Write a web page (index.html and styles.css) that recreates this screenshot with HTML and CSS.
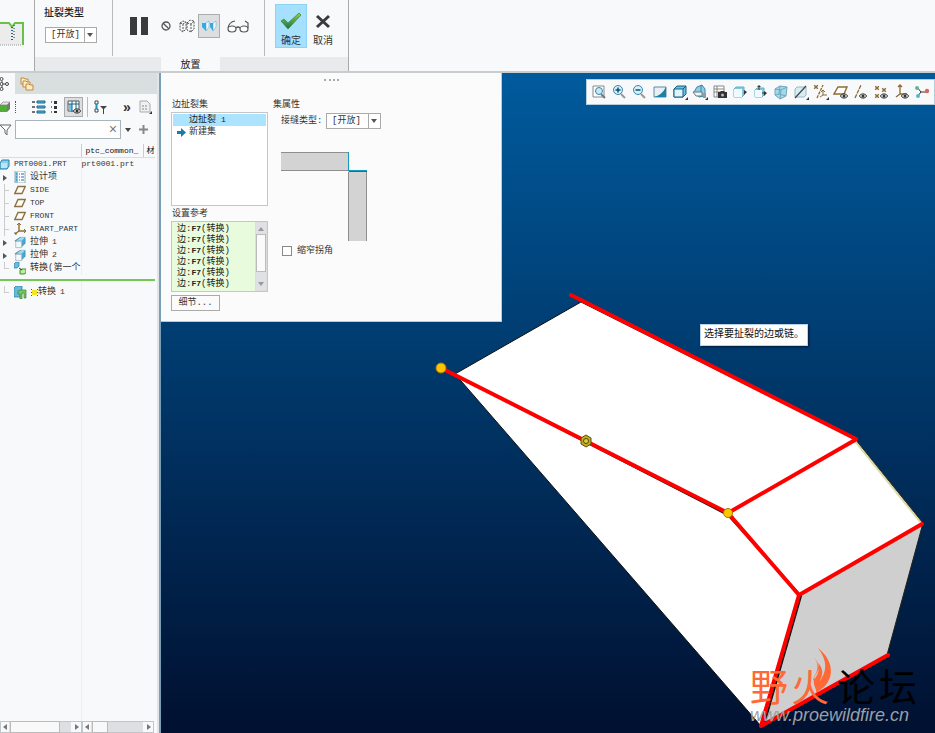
FILE: index.html
```html
<!DOCTYPE html>
<html lang="zh-CN">
<head>
<meta charset="utf-8">
<title>扯裂类型</title>
<link rel="stylesheet" href="styles.css">
</head>
<body>
<svg class="defs" aria-hidden="true">
  <defs>
    <symbol id="plane" viewBox="0 0 12 12"><path d="M4 2.5h7.2L8 9.5H.8z" fill="#fffdf5" stroke="#8d7142" stroke-width="1.4"/></symbol>
    <symbol id="extrude" viewBox="0 0 14 14"><path d="M1 5l6-4h6v7l-4 4z" fill="#46a7d2" stroke="#39799c" stroke-width=".6"/><path d="M3 5L8 1h5L9 5z" fill="#a5d9ec"/><path d="M2 5.500h7V13H2z" fill="#f4f7fa" stroke="#9aa5ab" stroke-width=".8"/></symbol>
    <symbol id="eye" viewBox="0 0 8 6"><path d="M.3 3C2 .2 6 .2 7.700 3 6 5.800 2 5.800.3 3z" fill="#f2f2f2" stroke="#333"/><circle cx="4" cy="3" r="1.500" fill="#333"/></symbol>
    <symbol id="cross4" viewBox="0 0 5 5"><path d="M1 1l3 3M4 1L1 4" stroke="#8d6b32" stroke-width="1.200"/></symbol>
    <linearGradient id="tick" x2="0" y2="1"><stop stop-color="#9ccc3c"/><stop offset="1" stop-color="#0d7350"/></linearGradient>
  </defs>
</svg>

<header class="ribbon">
  <div class="ribbon-icon">
    <svg width="24" height="26" viewBox="0 0 24 26"><path d="M0 2h23v22H0z" fill="#ececec"/><path d="M0 2h9l3 4 3-4h8v22" fill="none" stroke="#69c04d" stroke-width="2"/><path d="M0 24h22" stroke="#999" stroke-dasharray="1 1"/><path d="M12 6v13" stroke="#16688c" stroke-width="2" stroke-dasharray="1 2"/><path d="M14 4v13" stroke="#333" stroke-dasharray="1 2"/></svg>
  </div>
  <div class="ribbon-body">
    <div class="tools">
      <div class="tool-group type-group">
        <label for="rip-type">扯裂类型</label>
        <span class="select"><select id="rip-type"><option>[开放]</option></select></span>
      </div>
      <div class="tool-group play-group">
        <button class="flat" aria-label="暂停"><svg width="18" height="18" viewBox="0 0 18 18"><path d="M0 0h7v18H0zM11 0h7v18h-7z" fill="#3b3b3b"/></svg></button>
        <button class="flat" aria-label="无预览"><svg width="10" height="10" viewBox="0 0 10 10"><circle cx="5" cy="5" r="4" fill="none" stroke="#555" stroke-width="1.300"/><path d="M2.200 2.200l5.600 5.600" stroke="#555" stroke-width="1.300"/></svg></button>
        <button class="flat" aria-label="分离"><svg width="16" height="14" viewBox="0 0 16 14"><path d="M1 4l3 1 3-2v7l-3 3-3-2zM4 5v7M8 4l4 1 3-3v8l-3 3-4-2zM12 5v8M1 4l3-2 3 1M8 4l3-3 4 1" fill="none" stroke="#555" stroke-dasharray="2 1"/></svg></button>
        <button class="flat pressed" aria-label="附加"><svg width="16" height="12" viewBox="0 0 16 12"><path d="M1 3l3-2h4v6l-4 4-3-4zM9 3l2-2h4v6l-3 4-3-4z" fill="#bdeaff"/><path d="M1 3h4v8L1 7zM9 3h3v8L9 7z" fill="#35a9e0"/><path d="M5 3l3-2v6l-3 4zM12 3l3-2v6l-3 4z" fill="#eefbff" stroke="#559fbf" stroke-width=".5"/></svg></button>
        <button class="flat" aria-label="眼镜预览"><svg width="22" height="13" viewBox="0 0 22 13"><ellipse cx="5" cy="9" rx="4" ry="3" fill="#fff" stroke="#555" stroke-width="1.200"/><ellipse cx="17" cy="9" rx="4" ry="3" fill="#fff" stroke="#555" stroke-width="1.200"/><path d="M9 8q2-2 4 0M1 8q1-6 7-7M21 8V3l-3-2" fill="none" stroke="#555" stroke-width="1.200"/></svg></button>
      </div>
      <div class="tool-group ok-group">
        <button class="big ok"><svg width="22" height="18" viewBox="0 0 22 18"><path d="M1 9l3-2 4 4L19 1l2 2L8 17z" fill="url(#tick)" stroke="#35843a" stroke-width=".7"/></svg>确定</button>
        <button class="big"><svg width="22" height="18" viewBox="0 0 22 18"><path d="M5 4l12 11M17 4L5 15" stroke="#3b3b3b" stroke-width="3"/></svg>取消</button>
      </div>
    </div>
    <nav class="tabs"><button class="tab">放置</button></nav>
  </div>
</header>

<main class="work">
  <aside class="sidebar">
    <div class="side-tabs">
      <button class="side-tab active" aria-label="模型树"><svg width="9" height="14" viewBox="0 0 9 14"><g fill="#fff" stroke="#444"><path d="M2 4v7M3 7h3" /><circle cx="1.500" cy="2" r="1.500"/><circle cx="1.500" cy="7" r="1.500"/><circle cx="1.500" cy="12" r="1.500"/><circle cx="7" cy="7" r="1.500"/></g></svg></button>
      <button class="side-tab" aria-label="文件夹"><svg width="14" height="14" viewBox="0 0 14 14"><g fill="#ffedc9" stroke="#c08a3c"><path d="M1 1h3l1 1h3v5H1z"/><path d="M3 4h3l1 1h3v5H3z"/><path d="M6 7h3l1 1h3v5H6z"/></g></svg></button>
    </div>
    <div class="side-tools">
      <button class="flat" aria-label="模型"><svg width="10" height="14" viewBox="0 0 10 14"><path d="M0 5h7v7H0z" fill="#4fae36"/><path d="M0 5l3-3h7L7 5z" fill="#e3e7e2" stroke="#777" stroke-width=".6"/><path d="M7 5l3-3v7l-3 3z" fill="#777"/></svg></button>
      <span class="grip"></span>
      <button class="flat" aria-label="展开"><svg width="14" height="14" viewBox="0 0 14 14"><path d="M5 1h8v2H5zM5 6h8v2H5zM5 11h8v2H5z" fill="#54b9e2" stroke="#17668d"/><path d="M0 2h3M0 7h3M0 12h3" stroke="#444" stroke-width="1.500"/></svg></button>
      <button class="flat" aria-label="折叠"><svg width="10" height="14" viewBox="0 0 10 14"><path d="M4 1h3v3H4zM4 6h3v3H4zM4 11h3v2H4z" fill="#333"/><path d="M1 2h1M1 7h1M1 12h1" stroke="#555" stroke-width="1.500"/></svg></button>
      <button class="flat pressed columns" aria-label="树列"><svg width="14" height="14" viewBox="0 0 14 14"><path d="M1 1h11v10H1z" fill="#fff" stroke="#555"/><path d="M2 4h3v7H2z" fill="#6ec4e8"/><path d="M1 4h11M5 1v11M9 1v9" stroke="#17668d"/><use href="#eye" x="6" y="8" width="8" height="6"/></svg></button>
      <span class="rule"></span>
      <button class="flat" aria-label="过滤器"><svg width="13" height="14" viewBox="0 0 13 14"><path d="M1 1h3v3H1zM1 9h3v3H1z" fill="#fff" stroke="#444"/><path d="M2.500 4v5" stroke="#2590b9" stroke-width="2"/><path d="M6 6h7l-3 3v5H9V9z" fill="#444"/></svg></button>
      <button class="flat more" aria-label="更多">»</button>
      <button class="flat" aria-label="列表"><svg width="13" height="14" viewBox="0 0 13 14"><path d="M1 1h7l3 3v8H1z" fill="#eef0f1" stroke="#aaa"/><path d="M3 6h6M3 9h6" stroke="#888" stroke-dasharray="2 1"/><path d="M13 11v3h-3z" fill="#333"/></svg></button>
    </div>
    <div class="search">
      <svg width="12" height="12" viewBox="0 0 12 12"><path d="M0 1h11L7 6v5L5 9V6z" fill="#fff" stroke="#666"/></svg>
      <span class="search-box"><input type="text" aria-label="搜索"><button class="flat clear" aria-label="清除">×</button></span>
      <span class="caret"></span>
      <button class="flat" aria-label="添加"><svg width="9" height="9" viewBox="0 0 9 9"><path d="M4.500 0v9M0 4.500h9" stroke="#888" stroke-width="2"/></svg></button>
    </div>
    <table class="tree">
      <thead><tr><th class="name"></th><th class="common">ptc_common_</th><th class="mat">材</th></tr></thead>
      <tbody>
        <tr><td><div class="node root"><svg width="11" height="11" viewBox="0 0 11 11"><path d="M1 4l2-3h7v6l-2 3H1z" fill="#89cfeb" stroke="#257fa8"/><path d="M2 4h6v5H2z" fill="#b9e7f7"/></svg><span class="latin">PRT0001.PRT</span></div></td><td class="latin">prt0001.prt</td><td></td></tr>
        <tr><td><div class="node"><i class="arrow"></i><svg width="12" height="12" viewBox="0 0 12 12"><path d="M1 0h10v12H1z" fill="#fff" stroke="#8badbf"/><path d="M1 1h3v11H1z" fill="#83c6df"/><path d="M2 3h1M5 3h1M7 3h3M2 6h1M5 6h1M7 6h3M2 9h1M5 9h1M7 9h3" stroke="#246b9c"/></svg>设计项</div></td><td></td><td></td></tr>
        <tr><td><div class="node"><i class="stem"></i><svg width="12" height="12"><use href="#plane"/></svg><span class="latin">SIDE</span></div></td><td></td><td></td></tr>
        <tr><td><div class="node"><i class="stem"></i><svg width="12" height="12"><use href="#plane"/></svg><span class="latin">TOP</span></div></td><td></td><td></td></tr>
        <tr><td><div class="node"><i class="stem"></i><svg width="12" height="12"><use href="#plane"/></svg><span class="latin">FRONT</span></div></td><td></td><td></td></tr>
        <tr><td><div class="node"><i class="stem"></i><svg width="12" height="12" viewBox="0 0 12 12"><path d="M5 0v8h7M5 8l-4 3" fill="none" stroke="#8d6b32" stroke-width="1.400"/><path d="M3 2l2-2 2 2M1 9v2h2M10 6l2 2-2 2" fill="none" stroke="#8d6b32"/></svg><span class="latin">START_PART</span></div></td><td></td><td></td></tr>
        <tr><td><div class="node"><i class="arrow"></i><svg width="12" height="13"><use href="#extrude"/></svg>拉伸<span class="latin">1</span></div></td><td></td><td></td></tr>
        <tr><td><div class="node"><i class="arrow"></i><svg width="12" height="13"><use href="#extrude"/></svg>拉伸<span class="latin">2</span></div></td><td></td><td></td></tr>
        <tr><td><div class="node"><i class="stem last"></i><svg width="12" height="13" viewBox="0 0 12 13"><path d="M0 2l2-2h3v4L3 6H0z" fill="#67bde0" stroke="#287da0" stroke-width=".7"/><path d="M6 8l2-1h4v4l-2 1H6z" fill="#b9f098" stroke="#3c932d"/><path d="M5 6l3 2" stroke="#333"/></svg>转换(第一个</div></td><td></td><td></td></tr>
        <tr class="insert"><td></td><td></td><td></td></tr>
        <tr class="after"><td><div class="node"><i class="stem last"></i><svg width="13" height="13" viewBox="0 0 13 13"><path d="M0 2l2-2h6v8l-2 3H0z" fill="#65b9dd" stroke="#237899" stroke-width=".7"/><path d="M4 5l3-1h5v8h-2V7H8v6H6V8H4z" fill="#75c75f" stroke="#39843b" stroke-width=".7"/></svg><span class="star"><svg width="7" height="7" viewBox="0 0 7 7"><path d="M0 0l7 7M7 0L0 7M0 3.500h7" stroke="#555"/><path d="M1 1h5v5H1z" fill="#f5e71e"/></svg></span>转换<span class="latin">1</span></div></td><td></td><td></td></tr>
      </tbody>
    </table>
    <div class="filler"></div>
    <div class="hbars">
      <div class="hbar"><b class="left"></b><span class="thumb long"></span><b class="right"></b></div>
      <div class="hbar second"><b class="left"></b><span class="thumb"></span><b class="right"></b></div>
    </div>
  </aside>

  <section class="viewport">
    <svg class="scene" viewBox="161 73 774 660" preserveAspectRatio="xMinYMin meet">
      <path d="M455 374L581 302 855 439 923 523 799 595 761 726z" fill="#fff" stroke="#111"/>
      <path d="M799 595L923 523 887 655 761 726z" fill="#cfcfcf" stroke="#22221b"/>
      <path d="M855 441l67 83" stroke="#d9d9a5" stroke-width="2"/><path d="M856 440l67 83" stroke="#333"/>
      <path d="M453 374L728 515 801 596 764 725" fill="none" stroke="#111" stroke-width="2"/>
      <path d="M571 295L856 439M855 440L728 513M441 368L728 513 799 595 922 524M799 595L761 726 888 655" fill="none" stroke="#f00" stroke-width="4" stroke-linecap="round" stroke-linejoin="round"/>
      <g fill="#ffc400" stroke="#a67a00"><circle cx="441" cy="368" r="5"/><circle cx="728" cy="513" r="4.500"/></g>
      <path d="M586 435l5 3v6l-5 3-5-3v-6z" fill="#c0aa22" stroke="#5c5109"/><circle cx="586" cy="441" r="2.500" fill="#e0cd37" stroke="#534a0c"/>
      <g class="mark"><text x="750" y="701" fill="#ff6935">野</text><text x="791" y="701" fill="#ff6935">火</text><text x="837" y="701">论</text><text x="879" y="701">坛</text></g>
      <path d="M818 648c15 12 17 28 6 39l-8 6c1-5-3-6-2-13 1-8 7-9 4-17 7 7 4 14 1 19 8-10 9-21-1-34zM814 657c8 12 0 17-1 24 8-9 7-16 1-24z" fill="#ff6935"/>
      <text class="site" x="750" y="721">www.proewildfire.cn</text>
    </svg>

    <div class="view-tools">
      <button aria-label="重新调整"><svg viewBox="0 0 16 16"><path d="M2 2h11v11H2z" fill="#fff" stroke="#888"/><circle cx="8" cy="7" r="3.500" fill="#c4e9f7" stroke="#3686a9"/><path d="M10 10l4 4" stroke="#777" stroke-width="2"/></svg></button>
      <button aria-label="放大"><svg viewBox="0 0 16 16"><circle cx="7" cy="6" r="4.500" fill="#d3effa" stroke="#3686a9"/><path d="M10 10l4 4" stroke="#999" stroke-width="2"/><path d="M4.500 6h5M7 3.500v5" stroke="#174c6a" stroke-width="1.500"/></svg></button>
      <button aria-label="缩小"><svg viewBox="0 0 16 16"><circle cx="7" cy="6" r="4.500" fill="#d3effa" stroke="#3686a9"/><path d="M10 10l4 4" stroke="#999" stroke-width="2"/><path d="M4.500 6h5" stroke="#174c6a" stroke-width="1.500"/></svg></button>
      <button aria-label="重画"><svg viewBox="0 0 16 16"><path d="M2 3h12v10H2z" fill="#e8eff2" stroke="#618b9d"/><path d="M2 13Q10 11 14 3v10z" fill="#1a81a9"/></svg></button>
      <button aria-label="显示样式"><svg viewBox="0 0 16 16"><path d="M2 5l3-3h9v8l-3 3H2z" fill="#6fbfde" stroke="#126184"/><path d="M2 5h9v8H2z" fill="#dff4fb" stroke="#126184"/><path d="M11 5l3-3" stroke="#126184"/><path d="M16 13v3h-3z" fill="#333"/></svg></button>
      <button aria-label="透视"><svg viewBox="0 0 16 16"><path d="M2 8l3-5 5-2 3 4v7l-6 1z" fill="#8dcde6" stroke="#3c87a6"/><path d="M1 8h9v4H4z" fill="#e4f7fd" stroke="#777"/><path d="M9 1v7" stroke="#3c87a6"/><path d="M11 9h3v5h-3z" fill="#999"/><path d="M16 13v3h-3z" fill="#333"/></svg></button>
      <button aria-label="视图管理器"><svg viewBox="0 0 16 16"><path d="M2 2h10v11H2zM2 5h10M2 8h10M5 2v11" fill="#fff" stroke="#888"/><path d="M6 8h2l1-1h3l1 1h2v6H6z" fill="#333"/><circle cx="10.500" cy="11" r="1.500" fill="#bbb"/></svg></button>
      <button aria-label="截面"><svg viewBox="0 0 16 16"><path d="M2 5l2-2h8v8l-2 2H2z" fill="#82c8e2" stroke="#69acc5"/><path d="M2 5h8v8H2z" fill="#eefaff"/><path d="M12 6l3 2-3 3z" fill="#333"/></svg></button>
      <button aria-label="移动"><svg viewBox="0 0 16 16"><path d="M3 6l2-2h7v7l-2 2H3z" fill="#82c8e2" stroke="#69acc5"/><path d="M3 6h7v7H3z" fill="#eefaff"/><path d="M7 3v3M10 9h3" stroke="#333"/><path d="M5 3l2-2 2 2zM12 7l3 2-3 3z" fill="#333"/></svg></button>
      <button aria-label="着色"><svg viewBox="0 0 16 16"><path d="M2 5l5-3 7 1-1 9-6 3-5-4z" fill="#a7d8ea" stroke="#6fa7bd"/><path d="M2 5l6 1 6-3M8 6l-1 9M7 2L6 10l7 2M2 11l4-1" stroke="#6fa7bd" fill="none"/></svg></button>
      <button aria-label="剖切"><svg viewBox="0 0 16 16"><path d="M2 5l2-2h9v8l-2 2H2z" fill="#d6edf5" stroke="#9ab8c4"/><path d="M2 14L13 2" stroke="#444" stroke-width="1.200"/><path d="M16 13v3h-3z" fill="#333"/></svg></button>
      <button aria-label="基准显示"><svg viewBox="0 0 16 16"><path d="M4 14L10 1" stroke="#8d6b32" stroke-width="1.300" stroke-dasharray="3 1"/><use href="#cross4" x="0" y="0" width="6" height="6"/><path d="M10 6v5l-3 2M10 11h4M8 8l2-2 2 2" fill="none" stroke="#8d6b32"/><path d="M16 13v3h-3z" fill="#333"/></svg></button>
      <button aria-label="平面显示"><svg viewBox="0 0 16 16"><path d="M5 3h9l-3 7H1z" fill="#fff" stroke="#8d6b32" stroke-width="1.400"/><use href="#eye" x="7" y="9" width="8" height="6"/></svg></button>
      <button aria-label="轴显示"><svg viewBox="0 0 16 16"><path d="M2 14L8 1" stroke="#8d6b32" stroke-width="1.300" stroke-dasharray="4 1"/><use href="#eye" x="6" y="9" width="8" height="6"/></svg></button>
      <button aria-label="点显示"><svg viewBox="0 0 16 16"><use href="#cross4" x="1" y="1" width="6" height="6"/><use href="#cross4" x="8" y="3" width="6" height="6"/><use href="#cross4" x="1" y="9" width="6" height="6"/><use href="#eye" x="7" y="9" width="8" height="6"/></svg></button>
      <button aria-label="坐标系显示"><svg viewBox="0 0 16 16"><path d="M6 1v9h7M6 10l-4 3M4 3l2-2 2 2" fill="none" stroke="#8d6b32" stroke-width="1.300"/><use href="#eye" x="7" y="9" width="8" height="6"/></svg></button>
      <button aria-label="旋转中心"><svg viewBox="0 0 16 16"><path d="M3 3l4 5h6M7 8l-4 5" stroke="#333" fill="none"/><circle cx="3" cy="4" r="2" fill="#62b78e"/><circle cx="13" cy="7" r="2.200" fill="#dc6560"/><circle cx="4" cy="12" r="2" fill="#5cb4d1"/></svg></button>
    </div>

    <form class="panel">
      <div class="handle"></div>
      <div class="panel-grid">
        <div class="sets">
          <h2>边扯裂集</h2>
          <ul class="set-list"><li class="selected">边扯裂<span class="latin">1</span></li><li><svg width="9" height="9" viewBox="0 0 9 9"><path d="M0 3h4V0l5 4.500L4 9V6H0z" fill="#187fa4"/></svg>新建集</li></ul>
          <h2 class="refs-title">设置参考</h2>
          <div class="refs">
            <ul><li>边:<b>F7</b>(转换)</li><li>边:<b>F7</b>(转换)</li><li>边:<b>F7</b>(转换)</li><li>边:<b>F7</b>(转换)</li><li>边:<b>F7</b>(转换)</li><li>边:<b>F7</b>(转换)</li></ul>
            <div class="vbar"><b class="up"></b><span></span><b class="down"></b></div>
          </div>
          <button type="button" class="details">细节...</button>
        </div>
        <div class="props">
          <h2>集属性</h2>
          <div class="seam"><label for="seam">接缝类型:</label><span class="select"><select id="seam"><option>[开放]</option></select></span></div>
          <svg class="diagram" width="86" height="89" viewBox="0 0 86 89"><path d="M0 0h68v19H0zM67 19h19v70H67z" fill="#d3d3d3"/><path d="M0 .5h67M0 18.500h67M67.500 20v69M85.500 20v69" stroke="#8e8e8e"/><path d="M67.500 0v19M68 18.500h18" stroke="#159bc0"/><path d="M68 19.500h18" stroke="#35667a"/></svg>
          <label class="check"><input type="checkbox">缩窄拐角</label>
        </div>
      </div>
    </form>
    <div class="tooltip" role="tooltip">选择要扯裂的边或链。</div>
  </section>
</main>
</body>
</html>
```

FILE: styles.css
```css
* { box-sizing: border-box; }
html, body { margin: 0; height: 100%; }
body {
  display: flex;
  flex-direction: column;
  overflow: hidden;
  background: #f8f9fb;
  color: #333;
  font: 9px/12px "Liberation Mono", "Noto Sans CJK SC", monospace;
}
svg { display: block; flex: none; }
button, select, input { margin: 0; font: inherit; color: inherit; }
button { padding: 0; }
ul { margin: 0; padding: 0; list-style: none; }
h2 { margin: 0; padding-left: 1px; font-size: 9px; font-weight: 400; line-height: 14px; }
.defs { position: absolute; width: 0; height: 0; }
.latin { font-size: 8px; }
.flat { display: flex; align-items: center; justify-content: center; border: 0; background: none; }
.pressed { border: 1px solid #aaadb0; background: #dcdee0; }

/* ribbon */
.ribbon { display: flex; flex: none; height: 73px; border-bottom: 2px solid #c8cecf; }
.ribbon-icon { width: 35px; padding-top: 21px; border-right: 1px solid #aaa; }
.ribbon-body { display: flex; flex-direction: column; width: 314px; border-right: 1px solid #aaa; }
.tools { display: flex; height: 57px; }
.tool-group { display: flex; height: 56px; }
.tool-group + .tool-group { border-left: 1px solid #bbb; }
.type-group { flex-direction: column; align-items: flex-start; width: 77px; padding: 8px 0 0 9px; gap: 7px; }
.type-group label { font-size: 10px; font-weight: 500; color: #222; }
.play-group { width: 152px; align-items: flex-start; padding: 14px 0 0 17px; }
.play-group .flat { height: 24px; margin-right: 13px; }
.play-group .flat + .flat { margin-right: 8px; }
.play-group .flat + .flat + .flat { margin-right: 3px; }
.play-group .flat.pressed { width: 22px; }
.play-group .flat.pressed + .flat { margin-left: 4px; }
.ok-group { padding: 4px 0 0 10px; }
.big { display: flex; flex-direction: column; align-items: center; width: 32px; height: 44px; padding-top: 8px; gap: 6px; border: 0; background: none; font-size: 10px; }
.big.ok { border: 1px solid #8ed3f4; padding-top: 7px; background: #a6e0ff; }
.tabs { display: flex; height: 14px; padding-left: 126px; background: linear-gradient(90deg, #e8eaeb 126px, transparent 126px 185px, #e8eaeb 185px); }
.tab { width: 59px; padding-top: 3px; border: 0; background: #f8f9fb; font-size: 10px; line-height: 11px; color: #222; }
.select { position: relative; display: inline-flex; width: 55px; height: 16px; border: 1px solid #aaa; background: #fff; }
.type-group .select { width: 52px; margin-left: 1px; }
.select select { width: 100%; padding: 0 0 0 5px; border: 0; background: none; appearance: none; line-height: 12px; }
.select::before { content: ""; position: absolute; top: 0; right: 11px; height: 14px; border-left: 1px solid #aaa; }
.select::after { content: ""; position: absolute; top: 5px; right: 3px; border: 3px solid transparent; border-top: 4px solid #555; border-bottom: 0; }

/* model tree */
.work { display: flex; flex: 1; min-height: 0; }
.sidebar { display: flex; flex-direction: column; width: 161px; flex: none; border-right: 2px solid #789eb8; background: #f8f9fb; box-shadow: inset -2px 0 #e1e5e7; }
.side-tabs { display: flex; height: 21px; margin-right: 2px; background: #d9dedf; }
.side-tab { width: 24px; padding-left: 5px; border: 0; background: none; }
.side-tab.active { width: 15px; padding: 0; background: #f8f9fb; }
.side-tools { display: flex; align-items: center; height: 26px; gap: 4px; }
.side-tools .columns { width: 19px; height: 20px; }
.grip { width: 2px; height: 12px; margin: 0 11px 0 1px; border-left: 1px dotted #555; }
.rule { width: 1px; height: 20px; margin-right: 2px; background: #bbb; }
.side-tools .more { width: 8px; margin: 0 4px 0 12px; font: bold 14px/14px "Liberation Sans", sans-serif; }
.search { display: flex; align-items: center; height: 19px; gap: 3px; }
.search-box { display: flex; width: 106px; height: 19px; border: 1px solid #a6b6ba; background: #fff; }
.search-box input { flex: 1; min-width: 0; border: 0; background: none; }
.search .clear { width: 14px; color: #777; font-size: 14px; }
.caret { margin: 0 5px 0 1px; border: 3px solid transparent; border-top: 4px solid #444; border-bottom: 0; }
.tree { width: 155px; margin-top: 5px; border-collapse: collapse; table-layout: fixed; }
.tree th, .tree td { padding: 0; white-space: nowrap; text-align: left; }
.tree th { height: 13px; padding-top: 1px; border-bottom: 1px solid #ddd; font-size: 8px; font-weight: 400; line-height: 11px; color: #111; }
.tree .name { width: 81px; }
.tree .common { width: 62px; padding-left: 4px; border-left: 1px solid #ccc; }
.tree .mat { padding-left: 3px; border-left: 1px solid #ccc; }
.tree td { height: 13px; line-height: 12px; }
.tree td + td { border-left: 1px solid #eceef0; }
.tree td + td + td { border-left: 0; }
.node { display: flex; align-items: center; height: 13px; gap: 4px; overflow: hidden; }
.node svg { margin-left: 1px; }
.node.root svg { margin-left: -1px; }
.node .star svg { margin: 0; }
.node .star { margin-right: -4px; }
.arrow, .stem { flex: none; width: 9px; height: 13px; }
.arrow::before { content: ""; display: block; width: 0; margin: 4px 0 0 3px; border: 3px solid transparent; border-left: 4px solid #555; border-right: 0; }
.stem { width: 5px; margin-left: 4px; border-left: 1px solid #ccc; background: linear-gradient(#ccc, #ccc) 0 6px / 100% 1px no-repeat; }
.stem.last { height: 7px; align-self: flex-start; }
.tree .insert td { height: 5px; border: 0; border-bottom: 2px solid #74c955; }
.tree .after td { padding-top: 5px; }
.filler { flex: 1; margin-right: 4px; background: linear-gradient(90deg, transparent 81px, #eceef0 81px 82px, transparent 82px); }
.hbars { display: flex; height: 12px; margin-right: 5px; }
.hbar { display: flex; align-items: center; width: 82px; height: 12px; padding: 0 2px; gap: 3px; border: 1px solid #c3c6c8; background: linear-gradient(90deg, #f8f9fb 8px, #dddfe1 8px calc(100% - 10px), #f8f9fb calc(100% - 10px)); }
.hbar.second { width: 72px; }
.thumb { width: 16px; height: 12px; border: 1px solid #bbb; background: #f9f9f9; }
.thumb.long { width: 50px; }
.right { margin-left: auto; }
.left, .right, .up, .down { border: 3px solid transparent; }
.left { border-right: 4px solid #777; border-left: 0; }
.right { border-left: 4px solid #777; border-right: 0; }
.up { border-bottom: 4px solid #999; border-top: 0; }
.down { border-top: 4px solid #999; border-bottom: 0; }

/* graphics window */
.viewport { position: relative; flex: 1; min-width: 0; overflow: hidden; background: linear-gradient(#005b9d, #001030); }
.scene { width: 100%; height: auto; }
.mark { font: 400 38px "Noto Sans CJK SC", sans-serif; }
.site { font: italic 18px "Liberation Sans", sans-serif; fill: #9b9fa5; }
.view-tools { position: absolute; top: 6px; right: 0; display: flex; width: 349px; height: 26px; padding: 0 2px; border: 1px solid #b8cbd8; background: #f8f9fb; }
.view-tools button { display: flex; flex: 1; align-items: center; justify-content: center; min-width: 0; border: 0; background: none; }
.view-tools svg { width: 16px; height: 16px; }
.panel { position: absolute; top: 0; left: 0; width: 341px; border: 1px solid #bccad3; border-width: 0 1px 1px 0; padding: 6px 10px 10px; background: #fbfbfc; }
.handle { width: 15px; height: 3px; margin: 0 auto 16px; border-top: 2px dotted #aaa; }
.panel-grid { display: grid; grid-template-columns: 97px 1fr; gap: 4px; }
.set-list { height: 94px; padding: 1px; border: 1px solid #c3c7c9; background: #fff; }
.set-list li { display: flex; align-items: center; height: 12px; padding-left: 4px; gap: 3px; }
.set-list .selected { padding-left: 16px; gap: 5px; background: #ace3ff; color: #222; }
.refs-title { padding-top: 1px; }
.refs { display: flex; height: 71px; border: 1px solid #c3c7c9; background: #e8fbdc; }
.refs ul { flex: 1; padding: 2px 0 0 5px; line-height: 11px; color: #222; }
.refs li { height: 11px; white-space: nowrap; }
.refs b { font-size: 8px; line-height: 8px; }
.vbar { display: flex; flex-direction: column; align-items: center; justify-content: space-between; width: 12px; padding: 4px 0; border: 1px solid #ddd; background: #dfe1e4; }
.vbar span { width: 100%; height: 38px; margin-bottom: 8px; border: 1px solid #bbb; background: #fafafa; }
.details { display: block; width: 49px; height: 16px; margin-top: 3px; border: 1px solid #aaa; background: #fbfbfc; }
.props { display: flex; flex-direction: column; align-items: flex-start; }
.seam { display: flex; align-items: center; height: 17px; padding-left: 9px; white-space: nowrap; }
.seam label { width: 45px; }
.diagram { margin: 23px 0 0 9px; }
.check { display: flex; align-items: center; margin: 4px 0 0 10px; gap: 5px; }
.check input { width: 10px; height: 10px; border: 1px solid #888; background: #fff; appearance: none; }
.tooltip { position: absolute; top: 251px; left: 539px; padding: 4px 3px; border: 1px solid #b9d4e8; background: #fff; box-shadow: 1px 1px 2px #001a38; color: #111; font-size: 10px; white-space: nowrap; }
```
